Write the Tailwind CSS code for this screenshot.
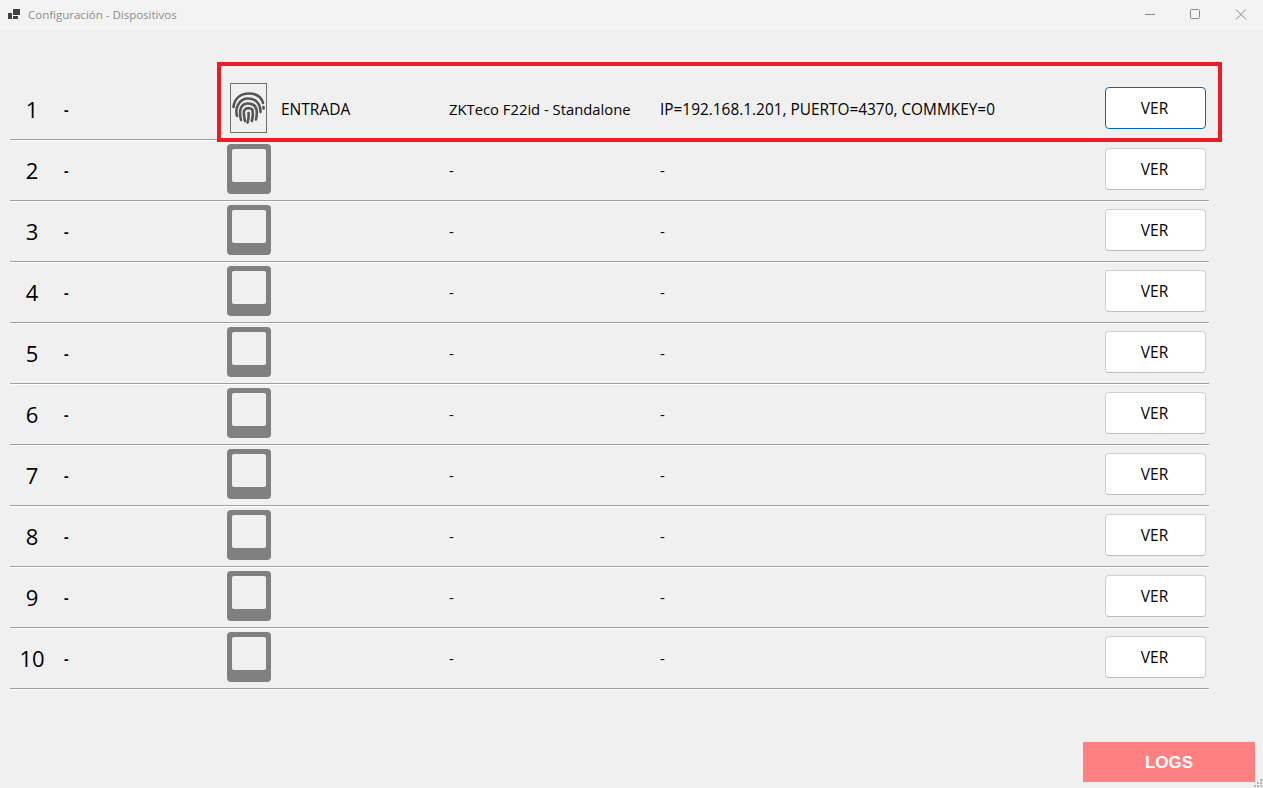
<!DOCTYPE html>
<html lang="es">
<head>
<meta charset="utf-8">
<title>Configuración - Dispositivos</title>
<script src="https://cdn.jsdelivr.net/npm/@tailwindcss/browser@4"></script>
</head>
<body class="relative w-[1263px] h-[788px] overflow-hidden bg-[#f0f0f0] font-['Open_Sans','Noto_Sans',sans-serif] text-black">
<header class="h-[30px] bg-[#f3f3f3] flex items-center relative">
  <svg class="ml-[8px] w-[12px] h-[12px]" viewBox="0 0 12 12"><path fill="#404040" d="M0 4h4v6H0zM5 0h7v6H5zM5 7h5v3H5z"/></svg>
  <span class="ml-[8px] text-[11.5px] text-[#8c8c8c]">Configuración - Dispositivos</span>
  <div class="ml-auto flex items-center">
    <svg class="w-[46px] h-[30px]" viewBox="0 0 46 30"><path stroke="#8a8a8a" d="M19 14.5h10"/></svg>
    <svg class="w-[46px] h-[30px]" viewBox="0 0 46 30"><rect x="18.5" y="9.5" width="9" height="9" rx="1" fill="none" stroke="#8a8a8a"/></svg>
    <svg class="w-[46px] h-[30px] mr-[-1px]" viewBox="0 0 46 30"><path stroke="#8a8a8a" fill="none" d="M18 9.5l10 10M28 9.5l-10 10"/></svg>
  </div>
</header>
<main class="pt-[49px] pl-[10px] w-[1209px]">
  <div class="h-[61px] flex items-center border-b border-[#a0a0a0] shadow-[0_1px_0_#ffffff]">
    <span class="w-[44px] text-center text-[22px]">1</span><span class="w-[173px] pl-[10px] text-[14px] font-bold">-</span>
    <div class="w-[54px] pl-[3px] mb-[2px]"><div class="w-[37px] h-[50px] border border-[#707070] bg-[#f0f0f0] flex items-center justify-center">
      <svg class="w-[33px] h-[32px]" viewBox="0 0 33 32" fill="none" stroke="#555555" stroke-width="2.6" stroke-linecap="round"><path d="M1.5 15C2.5 6 9 1.5 16.5 1.5C24 1.5 29.500 5 31 11"/><path d="M31.500 15v1.500"/><path d="M5 24C2.500 15 8 6.500 16 6.500C24 6.500 28.500 12 28.500 20"/><path d="M9 28C6.500 18 9 11.500 16 11.500C22 11.500 24.800 15 24.800 21C24.800 24 24.500 25.500 24 27.500"/><path d="M13 29C12 24 11 20 12.500 18C14.500 15.500 19 15.500 20.500 18C21.300 22 20.800 26 19.800 29"/><path d="M16.500 21C17 25 16.500 27.500 15.500 30.500"/></svg>
    </div></div>
    <span class="w-[168px] mt-[2px] text-[15.5px]">ENTRADA</span>
    <span class="w-[211px] text-[14.8px]">ZKTeco F22id - Standalone</span>
    <span class="w-[445px] mt-[2px] text-[15.4px]">IP=192.168.1.201, PUERTO=4370, COMMKEY=0</span>
    <button class="w-[101px] h-[42px] mb-[2px] pr-[2px] pt-[2px] bg-white rounded-[4px] border border-[#0067c0] text-[15.5px]">VER</button>
  </div>
  <div class="h-[61px] flex items-center border-b border-[#a0a0a0] shadow-[0_1px_0_#ffffff]">
    <span class="w-[44px] text-center text-[22px]">2</span><span class="w-[173px] pl-[10px] text-[14px] font-bold">-</span>
    <div class="w-[222px] mb-[2px]"><div class="w-[44px] h-[50px] rounded-[4px] bg-[#808080] pt-[5px] pl-[5px]"><div class="w-[34px] h-[33px] rounded-[2px] bg-[#f0f0f0]"></div></div></div>
    <span class="w-[211px] text-[15px]">-</span><span class="w-[445px] text-[15px]">-</span>
    <button class="w-[101px] h-[42px] mb-[2px] pr-[2px] pt-[2px] bg-white rounded-[4px] border border-[#d0d0d0] border-b-[#bcbcbc] text-[15.5px]">VER</button>
  </div>
  <div class="h-[61px] flex items-center border-b border-[#a0a0a0] shadow-[0_1px_0_#ffffff]">
    <span class="w-[44px] text-center text-[22px]">3</span><span class="w-[173px] pl-[10px] text-[14px] font-bold">-</span>
    <div class="w-[222px] mb-[2px]"><div class="w-[44px] h-[50px] rounded-[4px] bg-[#808080] pt-[5px] pl-[5px]"><div class="w-[34px] h-[33px] rounded-[2px] bg-[#f0f0f0]"></div></div></div>
    <span class="w-[211px] text-[15px]">-</span><span class="w-[445px] text-[15px]">-</span>
    <button class="w-[101px] h-[42px] mb-[2px] pr-[2px] pt-[2px] bg-white rounded-[4px] border border-[#d0d0d0] border-b-[#bcbcbc] text-[15.5px]">VER</button>
  </div>
  <div class="h-[61px] flex items-center border-b border-[#a0a0a0] shadow-[0_1px_0_#ffffff]">
    <span class="w-[44px] text-center text-[22px]">4</span><span class="w-[173px] pl-[10px] text-[14px] font-bold">-</span>
    <div class="w-[222px] mb-[2px]"><div class="w-[44px] h-[50px] rounded-[4px] bg-[#808080] pt-[5px] pl-[5px]"><div class="w-[34px] h-[33px] rounded-[2px] bg-[#f0f0f0]"></div></div></div>
    <span class="w-[211px] text-[15px]">-</span><span class="w-[445px] text-[15px]">-</span>
    <button class="w-[101px] h-[42px] mb-[2px] pr-[2px] pt-[2px] bg-white rounded-[4px] border border-[#d0d0d0] border-b-[#bcbcbc] text-[15.5px]">VER</button>
  </div>
  <div class="h-[61px] flex items-center border-b border-[#a0a0a0] shadow-[0_1px_0_#ffffff]">
    <span class="w-[44px] text-center text-[22px]">5</span><span class="w-[173px] pl-[10px] text-[14px] font-bold">-</span>
    <div class="w-[222px] mb-[2px]"><div class="w-[44px] h-[50px] rounded-[4px] bg-[#808080] pt-[5px] pl-[5px]"><div class="w-[34px] h-[33px] rounded-[2px] bg-[#f0f0f0]"></div></div></div>
    <span class="w-[211px] text-[15px]">-</span><span class="w-[445px] text-[15px]">-</span>
    <button class="w-[101px] h-[42px] mb-[2px] pr-[2px] pt-[2px] bg-white rounded-[4px] border border-[#d0d0d0] border-b-[#bcbcbc] text-[15.5px]">VER</button>
  </div>
  <div class="h-[61px] flex items-center border-b border-[#a0a0a0] shadow-[0_1px_0_#ffffff]">
    <span class="w-[44px] text-center text-[22px]">6</span><span class="w-[173px] pl-[10px] text-[14px] font-bold">-</span>
    <div class="w-[222px] mb-[2px]"><div class="w-[44px] h-[50px] rounded-[4px] bg-[#808080] pt-[5px] pl-[5px]"><div class="w-[34px] h-[33px] rounded-[2px] bg-[#f0f0f0]"></div></div></div>
    <span class="w-[211px] text-[15px]">-</span><span class="w-[445px] text-[15px]">-</span>
    <button class="w-[101px] h-[42px] mb-[2px] pr-[2px] pt-[2px] bg-white rounded-[4px] border border-[#d0d0d0] border-b-[#bcbcbc] text-[15.5px]">VER</button>
  </div>
  <div class="h-[61px] flex items-center border-b border-[#a0a0a0] shadow-[0_1px_0_#ffffff]">
    <span class="w-[44px] text-center text-[22px]">7</span><span class="w-[173px] pl-[10px] text-[14px] font-bold">-</span>
    <div class="w-[222px] mb-[2px]"><div class="w-[44px] h-[50px] rounded-[4px] bg-[#808080] pt-[5px] pl-[5px]"><div class="w-[34px] h-[33px] rounded-[2px] bg-[#f0f0f0]"></div></div></div>
    <span class="w-[211px] text-[15px]">-</span><span class="w-[445px] text-[15px]">-</span>
    <button class="w-[101px] h-[42px] mb-[2px] pr-[2px] pt-[2px] bg-white rounded-[4px] border border-[#d0d0d0] border-b-[#bcbcbc] text-[15.5px]">VER</button>
  </div>
  <div class="h-[61px] flex items-center border-b border-[#a0a0a0] shadow-[0_1px_0_#ffffff]">
    <span class="w-[44px] text-center text-[22px]">8</span><span class="w-[173px] pl-[10px] text-[14px] font-bold">-</span>
    <div class="w-[222px] mb-[2px]"><div class="w-[44px] h-[50px] rounded-[4px] bg-[#808080] pt-[5px] pl-[5px]"><div class="w-[34px] h-[33px] rounded-[2px] bg-[#f0f0f0]"></div></div></div>
    <span class="w-[211px] text-[15px]">-</span><span class="w-[445px] text-[15px]">-</span>
    <button class="w-[101px] h-[42px] mb-[2px] pr-[2px] pt-[2px] bg-white rounded-[4px] border border-[#d0d0d0] border-b-[#bcbcbc] text-[15.5px]">VER</button>
  </div>
  <div class="h-[61px] flex items-center border-b border-[#a0a0a0] shadow-[0_1px_0_#ffffff]">
    <span class="w-[44px] text-center text-[22px]">9</span><span class="w-[173px] pl-[10px] text-[14px] font-bold">-</span>
    <div class="w-[222px] mb-[2px]"><div class="w-[44px] h-[50px] rounded-[4px] bg-[#808080] pt-[5px] pl-[5px]"><div class="w-[34px] h-[33px] rounded-[2px] bg-[#f0f0f0]"></div></div></div>
    <span class="w-[211px] text-[15px]">-</span><span class="w-[445px] text-[15px]">-</span>
    <button class="w-[101px] h-[42px] mb-[2px] pr-[2px] pt-[2px] bg-white rounded-[4px] border border-[#d0d0d0] border-b-[#bcbcbc] text-[15.5px]">VER</button>
  </div>
  <div class="h-[61px] flex items-center border-b border-[#a0a0a0] shadow-[0_1px_0_#ffffff]">
    <span class="w-[44px] text-center text-[22px]">10</span><span class="w-[173px] pl-[10px] text-[14px] font-bold">-</span>
    <div class="w-[222px] mb-[2px]"><div class="w-[44px] h-[50px] rounded-[4px] bg-[#808080] pt-[5px] pl-[5px]"><div class="w-[34px] h-[33px] rounded-[2px] bg-[#f0f0f0]"></div></div></div>
    <span class="w-[211px] text-[15px]">-</span><span class="w-[445px] text-[15px]">-</span>
    <button class="w-[101px] h-[42px] mb-[2px] pr-[2px] pt-[2px] bg-white rounded-[4px] border border-[#d0d0d0] border-b-[#bcbcbc] text-[15.5px]">VER</button>
  </div>
</main>
<div class="absolute left-[217px] top-[62px] w-[1005px] h-[80px] border-[4px] border-[#ed1c24]"></div>
<button class="absolute left-[1083px] top-[742px] w-[172px] h-[40px] pt-[1px] bg-[#ff8080] text-white text-[17px] font-bold font-['Liberation_Sans',sans-serif]">LOGS</button>
<svg class="absolute right-0 bottom-0 w-[9px] h-[9px]" viewBox="0 0 9 9"><path fill="#b5b5b5" d="M6 0h3v2H6zM3 3h2v2H3zM6 3h2v2H6zM0 6h2v2H0zM3 6h2v2H3zM6 6h2v2H6z"/></svg>
</body>
</html>
